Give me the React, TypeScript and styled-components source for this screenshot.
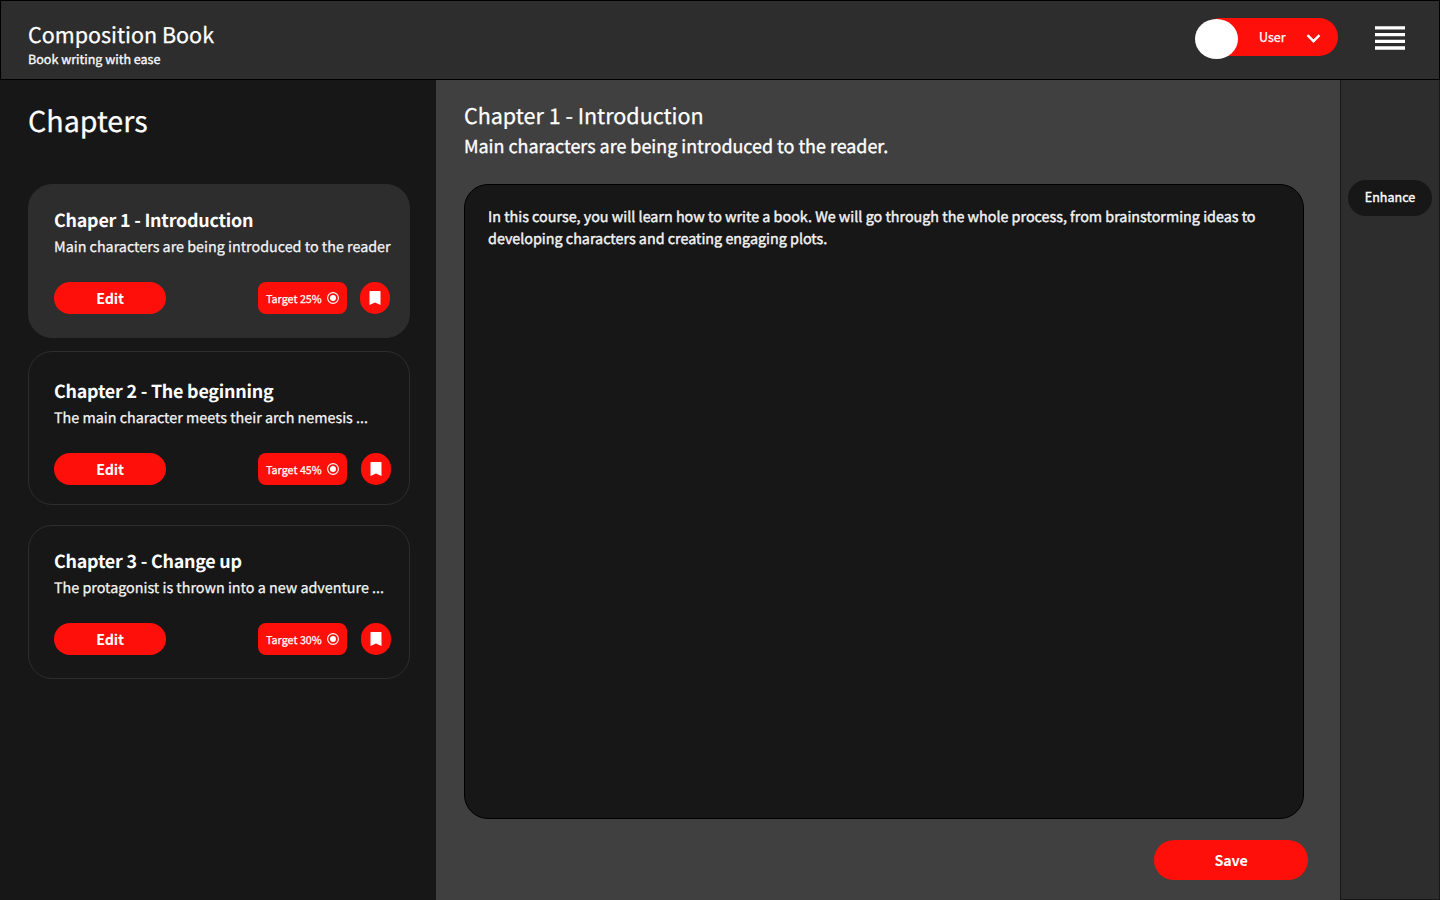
import React from "react";
import styled, { createGlobalStyle } from "styled-components";

const GlobalStyle = createGlobalStyle`
  * { box-sizing: border-box; }
  body { margin: 0; background: #171717; }
  h1, h2, h3, p { margin: 0; font-weight: 400; }
  button { border: 0; padding: 0; font: inherit; color: inherit; cursor: pointer; }
`;

const red = "#ff0f0a";

const Page = styled.div`
  display: flex;
  flex-direction: column;
  width: 1440px;
  height: 900px;
  overflow: hidden;
  color: #fff;
  background: #171717;
  font-family: "Noto Sans CJK SC", "Noto Sans", sans-serif;
  white-space: nowrap;
  -webkit-text-stroke: 0.25px currentColor;
  text-rendering: geometricPrecision;
`;

const Header = styled.header`
  display: flex;
  align-items: flex-start;
  height: 80px;
  padding: 0 34px 0 27px;
  background: #2d2d2d;
  border: 1px solid #000;
`;

const Brand = styled.div`
  flex: 1;
  padding-top: 18px;
`;

const BrandName = styled.h1`
  font-size: 21.5px;
  line-height: 32px;
`;

const Tagline = styled.p`
  margin-top: -1px;
  color: #f8f8f8;
  font-size: 12.54px;
  line-height: 18px;
  -webkit-text-stroke: 0.35px currentColor;
`;

const UserMenu = styled.button`
  display: flex;
  align-items: center;
  width: 136px;
  height: 38px;
  margin: 17px 37px 0 0;
  border-radius: 19px;
  background: ${red};
  font-size: 12.54px;
`;

const Avatar = styled.span`
  width: 43px;
  height: 40px;
  margin: 3px 21px 0 -7px;
  flex: none;
  border-radius: 50%;
  background: #fff;
`;

const UserName = styled.span`
  width: 47px;
  text-align: left;
  line-height: 20px;
`;

const MenuIcon = styled.svg`
  margin-top: 25px;
`;

const Body = styled.div`
  display: flex;
  flex: 1;
`;

const Sidebar = styled.aside`
  width: 436px;
  padding: 17px 26px 0 28px;
`;

const SidebarTitle = styled.h2`
  height: 87px;
  font-size: 28.65px;
  line-height: 48px;
`;

const Card = styled.article<{ $active?: boolean; $top: number; $gap: number; $right: number }>`
  height: 154px;
  margin-bottom: ${(p) => p.$gap}px;
  padding: ${(p) => p.$top}px ${(p) => p.$right}px 0 25px;
  border: 1px solid #2d2d2d;
  border-radius: 24px;
  background: ${(p) => (p.$active ? "#2d2d2d" : "transparent")};
`;

const CardTitle = styled.h3`
  padding-top: 2px;
  font-size: 17.9px;
  font-weight: 700;
  line-height: 28px;
  letter-spacing: -0.22px;
  -webkit-text-stroke: 0;
`;

const CardSummary = styled.p`
  padding-top: 1px;
  color: #f6f6f6;
  font-size: 14.33px;
  line-height: 24px;
`;

const CardActions = styled.div`
  display: flex;
  margin-top: 23px;
`;

const EditButton = styled.button`
  width: 112px;
  height: 32px;
  margin-right: 92px;
  border-radius: 16px;
  background: ${red};
  font-size: 14.33px;
  font-weight: 700;
  line-height: 32px;
  letter-spacing: -0.15px;
  -webkit-text-stroke: 0;
`;

const TargetBadge = styled.span`
  display: flex;
  align-items: center;
  justify-content: space-between;
  width: 89px;
  height: 32px;
  padding: 0 8px;
  border-radius: 8px;
  background: ${red};
  font-size: 10.75px;
  line-height: 28px;
`;

const TargetLabel = styled.span`
  padding-top: 3px;
`;

const BookmarkButton = styled.button`
  display: flex;
  align-items: center;
  justify-content: center;
  width: 30px;
  height: 32px;
  margin-left: auto;
  border-radius: 16px;
  background: ${red};
`;

const Editor = styled.main`
  width: 904px;
  padding: 20px 32px 0 28px;
  background: #404040;
`;

const EditorTitle = styled.h2`
  font-size: 21.5px;
  line-height: 32px;
`;

const EditorSummary = styled.p`
  font-size: 17.9px;
  line-height: 28px;
  -webkit-text-stroke: 0.35px currentColor;
`;

const Manuscript = styled.div`
  width: 840px;
  height: 635px;
  margin-top: 24px;
  padding: 21px 23px;
  border: 1px solid #000;
  border-radius: 24px;
  background: #171717;
  color: #f4f4f4;
  font-size: 14.33px;
  line-height: 22px;
  white-space: pre-line;
  -webkit-text-stroke: 0.4px currentColor;
`;

const SaveButton = styled.button`
  display: block;
  width: 154px;
  height: 40px;
  margin: 21px 0 0 690px;
  border-radius: 20px;
  background: ${red};
  font-size: 14.33px;
  font-weight: 700;
  line-height: 40px;
  letter-spacing: -0.2px;
  -webkit-text-stroke: 0;
`;

const Rail = styled.aside`
  width: 100px;
  padding: 100px 7px 0;
  background: #2d2d2d;
  border: 1px solid #171717;
  border-top: 0;
`;

const EnhanceButton = styled.button`
  width: 84px;
  height: 36px;
  padding-bottom: 2px;
  border-radius: 18px;
  background: #171717;
  font-size: 12.54px;
  line-height: 34px;
  -webkit-text-stroke: 0.35px currentColor;
`;

const chapters = [
  { title: "Chaper 1 - Introduction", summary: "Main characters are being introduced to the reader", target: 25, active: true, top: 19, gap: 13, right: 19 },
  { title: "Chapter 2 - The beginning", summary: "The main character meets their arch nemesis ...", target: 45, top: 23, gap: 20, right: 18 },
  { title: "Chapter 3 - Change up", summary: "The protagonist is thrown into a new adventure ...", target: 30, top: 19, gap: 0, right: 18 },
];

export default function App() {
  return (
    <Page>
      <GlobalStyle />
      <Header>
        <Brand>
          <BrandName>Composition Book</BrandName>
          <Tagline>Book writing with ease</Tagline>
        </Brand>
        <UserMenu>
          <Avatar />
          <UserName>User</UserName>
          <svg width="15" height="12" viewBox="0 0 15 12" fill="none">
            <path d="M1.5 4.2 7.5 10.2 13.5 4.2" stroke="#fff" strokeWidth="2.4" />
          </svg>
        </UserMenu>
        <MenuIcon width="30" height="24" viewBox="0 0 30 24" fill="#fff">
          <path d="M0 .2h30v3.4H0zM0 7h30v3.2H0zM0 13.8h30V17H0zM0 20.3h30v3.4H0z" />
        </MenuIcon>
      </Header>
      <Body>
        <Sidebar>
          <SidebarTitle>Chapters</SidebarTitle>
          {chapters.map((c) => (
            <Card key={c.title} $active={c.active} $top={c.top} $gap={c.gap} $right={c.right}>
              <CardTitle>{c.title}</CardTitle>
              <CardSummary>{c.summary}</CardSummary>
              <CardActions>
                <EditButton>Edit</EditButton>
                <TargetBadge>
                  <TargetLabel>Target {c.target}%</TargetLabel>
                  <svg width="12" height="12" viewBox="0 0 12 12">
                    <circle cx="6" cy="6" r="5.4" fill="none" stroke="#fff" strokeWidth="1.1" />
                    <circle cx="6" cy="6" r="3" fill="#fff" />
                  </svg>
                </TargetBadge>
                <BookmarkButton aria-label="Bookmark">
                  <svg width="12" height="14" viewBox="0 0 12 14" fill="#fff">
                    <path d="M1 0h10q.5 0 .5.5V14L6 11.4.5 14V.5Q.5 0 1 0z" />
                  </svg>
                </BookmarkButton>
              </CardActions>
            </Card>
          ))}
        </Sidebar>
        <Editor>
          <EditorTitle>Chapter 1 - Introduction</EditorTitle>
          <EditorSummary>Main characters are being introduced to the reader.</EditorSummary>
          <Manuscript>
            {"In this course, you will learn how to write a book. We will go through the whole process, from brainstorming ideas to\ndeveloping characters and creating engaging plots."}
          </Manuscript>
          <SaveButton>Save</SaveButton>
        </Editor>
        <Rail>
          <EnhanceButton>Enhance</EnhanceButton>
        </Rail>
      </Body>
    </Page>
  );
}
